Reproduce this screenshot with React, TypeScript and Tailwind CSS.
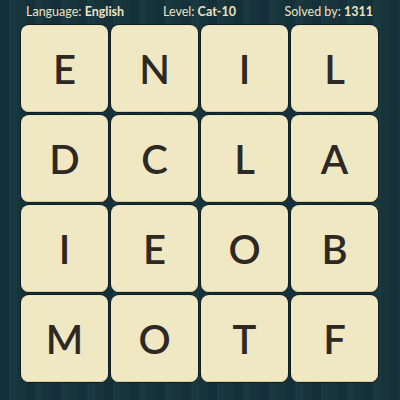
const LETTERS = ["E", "N", "I", "L", "D", "C", "L", "A", "I", "E", "O", "B", "M", "O", "T", "F"];

function Tile({ letter }: { letter: string }) {
  return (
    <div className="flex items-center justify-center rounded-[8px] bg-[#f0e8c3] shadow-[inset_0_-1px_0_#d9cfa4,0_0_0_1px_#0e1f24]">
      <span className="text-[40px] leading-none font-semibold text-[#2d2924]">{letter}</span>
    </div>
  );
}

export default function App() {
  return (
    <div
      className="w-[400px] h-[400px] overflow-hidden bg-[repeating-linear-gradient(90deg,#15303a_0px,#15303a_9px,#1a383f_9px,#1a383f_17px,#17343b_17px,#17343b_26px)] text-[#ece3c2]"
      style={{ fontFamily: "Lato, 'Noto Sans', sans-serif" }}
    >
      <div className="grid grid-cols-3 items-center h-[25px] px-[26px] pr-[27px] text-[12.5px]">
        <div className="justify-self-start whitespace-nowrap">
          Language: <span className="font-bold">English</span>
        </div>
        <div className="justify-self-center whitespace-nowrap">
          Level: <span className="font-bold">Cat-10</span>
        </div>
        <div className="justify-self-end whitespace-nowrap">
          Solved by: <span className="font-bold">1311</span>
        </div>
      </div>
      <div className="grid grid-cols-4 grid-rows-4 gap-[3px] ml-[21px] w-[357px] h-[357px]">
        {LETTERS.map((l, i) => (
          <Tile key={i} letter={l} />
        ))}
      </div>
    </div>
  );
}
